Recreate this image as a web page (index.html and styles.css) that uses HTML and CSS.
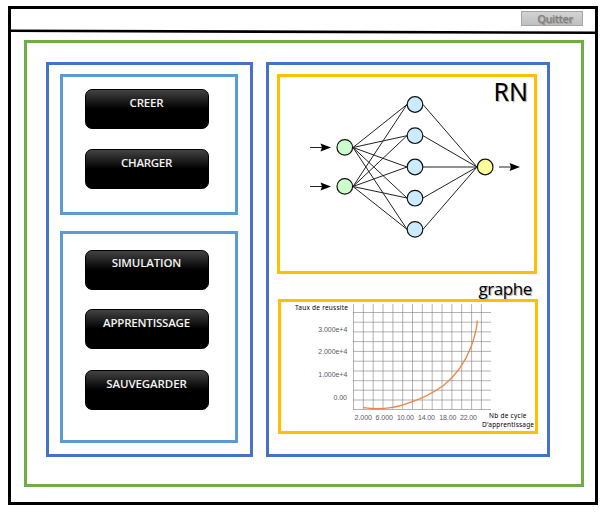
FILE: index.html
```html
<!DOCTYPE html>
<html lang="fr">
<head>
<meta charset="utf-8">
<title>RN</title>
<link rel="stylesheet" href="styles.css">
</head>
<body>
<div class="window">
  <header class="topbar">
    <button class="quit">Quitter</button>
    <svg class="rule" width="584" height="6" viewBox="0 0 584 6"><path d="M0 1.8L584 3.8" stroke="#000" stroke-width="2.6"/></svg>
  </header>
  <main class="workspace">
    <nav class="column sidebar">
      <section class="group files">
        <button class="action creer"><span>CREER</span></button>
        <button class="action charger"><span>CHARGER</span></button>
      </section>
      <section class="group run">
        <button class="action simulation"><span>SIMULATION</span></button>
        <button class="action apprentissage"><span>APPRENTISSAGE</span></button>
        <button class="action sauvegarder"><span>SAUVEGARDER</span></button>
      </section>
    </nav>
    <section class="column views">
      <div class="view network">
        <h1 class="network-title">RN</h1>
        <svg width="254" height="194" viewBox="280 77 254 194">
          <g stroke="#222" stroke-width="1" fill="none">
            <path d="M353 147.5L407 104.5M353 147.5L407 135.7M353 147.5L407 167M353 147.5L407 198M353 147.5L407 229.3"/>
            <path d="M353 186.5L407 104.5M353 186.5L407 135.7M353 186.5L407 167M353 186.5L407 198M353 186.5L407 229.3"/>
            <path d="M423 104.5L477 167M423 135.7L477 167M423 167H477M423 198L477 167M423 229.3L477 167"/>
            <path d="M310 147.5H323M310 186.5H323M499 167H512"/>
          </g>
          <path d="M331 147.5L320.5 143.5L322 147.5L320.5 151.5ZM331 186.5L320.5 182.5L322 186.5L320.5 190.5ZM520 167L509.500 163L511 167L509.500 171Z"/>
          <g stroke="#111" stroke-width="1.2">
            <g fill="#cfc"><circle cx="344.8" cy="147.4" r="7.8"/><circle cx="344.8" cy="186.400" r="7.8"/></g>
            <g fill="#cbecff"><circle cx="415" cy="104.500" r="7.8"/><circle cx="415" cy="135.700" r="7.8"/><circle cx="415" cy="167" r="7.8"/><circle cx="415" cy="198.200" r="7.8"/><circle cx="415" cy="229.400" r="7.8"/></g>
            <circle cx="485.2" cy="167" r="7.8" fill="#ff9"/>
          </g>
        </svg>
      </div>
      <h2 class="graph-title">graphe</h2>
      <div class="view graph">
        <svg width="254" height="129" viewBox="281 302 254 129">
          <path class="grid" d="M353.500 304V409.500M363.300 304V409.500M373.200 304V409.500M383 304V409.500M392.900 304V409.500M402.700 304V409.500M412.500 304V409.500M422.300 304V409.500M432.200 304V409.500M442 304V409.500M451.900 304V409.500M461.700 304V409.500M471.600 304V409.500M481.400 304V409.500"/>
          <path class="grid" d="M353 312.500H491M353 322.200H491M353 331.900H491M353 341.600H491M353 351.400H491M353 361.200H491M353 371H491M353 380.700H491M353 390.200H491M353 400H491M353 409.500H491"/>
          <path d="M363 407.600C376 409.200 390 409 403 404.800C416 401 431 394.500 443.500 385.500C459 373 466 360 471 347C475 336 476.800 330 477.300 320.500" fill="none" stroke="#ed8446" stroke-width="1.3"/>
          <g class="ticks">
            <text x="318.300" y="331.500" textLength="29">3.000e+4</text>
            <text x="318.300" y="354.300" textLength="29">2.000e+4</text>
            <text x="318.300" y="376.700" textLength="29">1.000e+4</text>
            <text x="333.500" y="399.500" textLength="13.500">0.00</text>
            <text x="354.500" y="419.500" textLength="17.500">2.000</text>
            <text x="375.500" y="419.500" textLength="17.500">6.000</text>
            <text x="397" y="419.500" textLength="17">10.00</text>
            <text x="418" y="419.500" textLength="17">14.00</text>
            <text x="439.300" y="419.500" textLength="17">18.00</text>
            <text x="460" y="419.500" textLength="17">22.00</text>
          </g>
          <g class="axis">
            <text x="295" y="310" textLength="53">Taux de reussite</text>
            <text x="489" y="417.800" textLength="37.500">Nb de cycle</text>
            <text x="482" y="426.800" textLength="52">D'apprentissage</text>
          </g>
        </svg>
      </div>
    </section>
  </main>
</div>
</body>
</html>
```
FILE: styles.css
```css
* { box-sizing: border-box; }
body {
  margin: 0;
  padding: 6px 6px 11px 8px;
  height: 516px;
  background: #fff;
  font-family: "Noto Sans", "Open Sans", sans-serif;
}
svg { display: block; }
.window { height: 499px; border: 3px solid #000; }
.topbar {
  height: 31px;
  padding-top: 2px;
  display: flex;
  flex-direction: column;
  justify-content: space-between;
}
.quit {
  align-self: flex-end;
  margin-right: 12px;
  width: 62px;
  height: 15px;
  padding: 0 0 0 6px;
  border: 1px solid #a5a5a5;
  background: linear-gradient(#d2d2d2, #c0c0c0);
  color: #7f7f7f;
  font: 600 11px/13px "Open Sans", sans-serif;
  letter-spacing: -0.4px;
  text-shadow: 1px 1px 1px #999;
  flex: none;
}
.rule { margin-bottom: 5px; flex: none; }
.workspace {
  margin: 0 11px 0 13px;
  height: 447px;
  border: 3px solid #70ad47;
  padding: 19px 31px 27px 19px;
  display: flex;
  gap: 13px;
}
.column { border: 3px solid #4472c4; height: 395px; }
.sidebar {
  width: 207px;
  padding: 9px 12px 11px 11px;
  display: flex;
  flex-direction: column;
  gap: 16px;
}
.group {
  border: 3px solid #5b9bd5;
  padding: 0 22px;
  display: flex;
  flex-direction: column;
}
.files { height: 141px; padding-top: 12px; gap: 20px; }
.run { height: 212px; padding-top: 16px; gap: 19px; }
.action {
  width: 124px;
  height: 40px;
  border: 1px solid #000;
  border-radius: 7px;
  padding: 5px 1px 0 0;
  background: linear-gradient(#434343, #000 50%);
  color: #f2f2f2;
  font: 600 11.5px/16px "Open Sans", sans-serif;
  display: flex;
  justify-content: center;
  align-items: flex-start;
  flex: none;
}
.creer { letter-spacing: -0.2px; }
.charger { letter-spacing: -0.3px; }
.simulation { letter-spacing: -0.15px; }
.simulation, .run .action { padding-top: 4px; }
.apprentissage { letter-spacing: -0.2px; }
.run .apprentissage { padding-top: 5px; }
.sauvegarder { letter-spacing: -0.1px; margin-top: 2px; }
.run .sauvegarder { padding-top: 5px; }
.views { width: 284px; padding: 9px 0 0 8px; }
.view { width: 260px; border: 3px solid #ffc000; }
.network { height: 200px; position: relative; }
.network-title {
  position: absolute;
  top: -3px;
  right: 6px;
  margin: 0;
  font: 400 25px/34px "Noto Sans", sans-serif;
  text-shadow: 1px 1px 1px #aaa;
}
.graph-title {
  margin: 0;
  height: 25px;
  padding: 3px 15px 0 0;
  text-align: right;
  font: 400 17px/24px "Open Sans", sans-serif;
  letter-spacing: -0.4px;
  text-shadow: 1px 1px 1px #aaa;
}
.graph { height: 135px; margin-left: 1px; }
.grid { fill: none; stroke: #777; stroke-opacity: 0.55; stroke-width: 1; }
.ticks { font: 7px "Liberation Sans", sans-serif; fill: #595963; }
.axis { font: 6.5px "Noto Sans", sans-serif; fill: #000; }
```
